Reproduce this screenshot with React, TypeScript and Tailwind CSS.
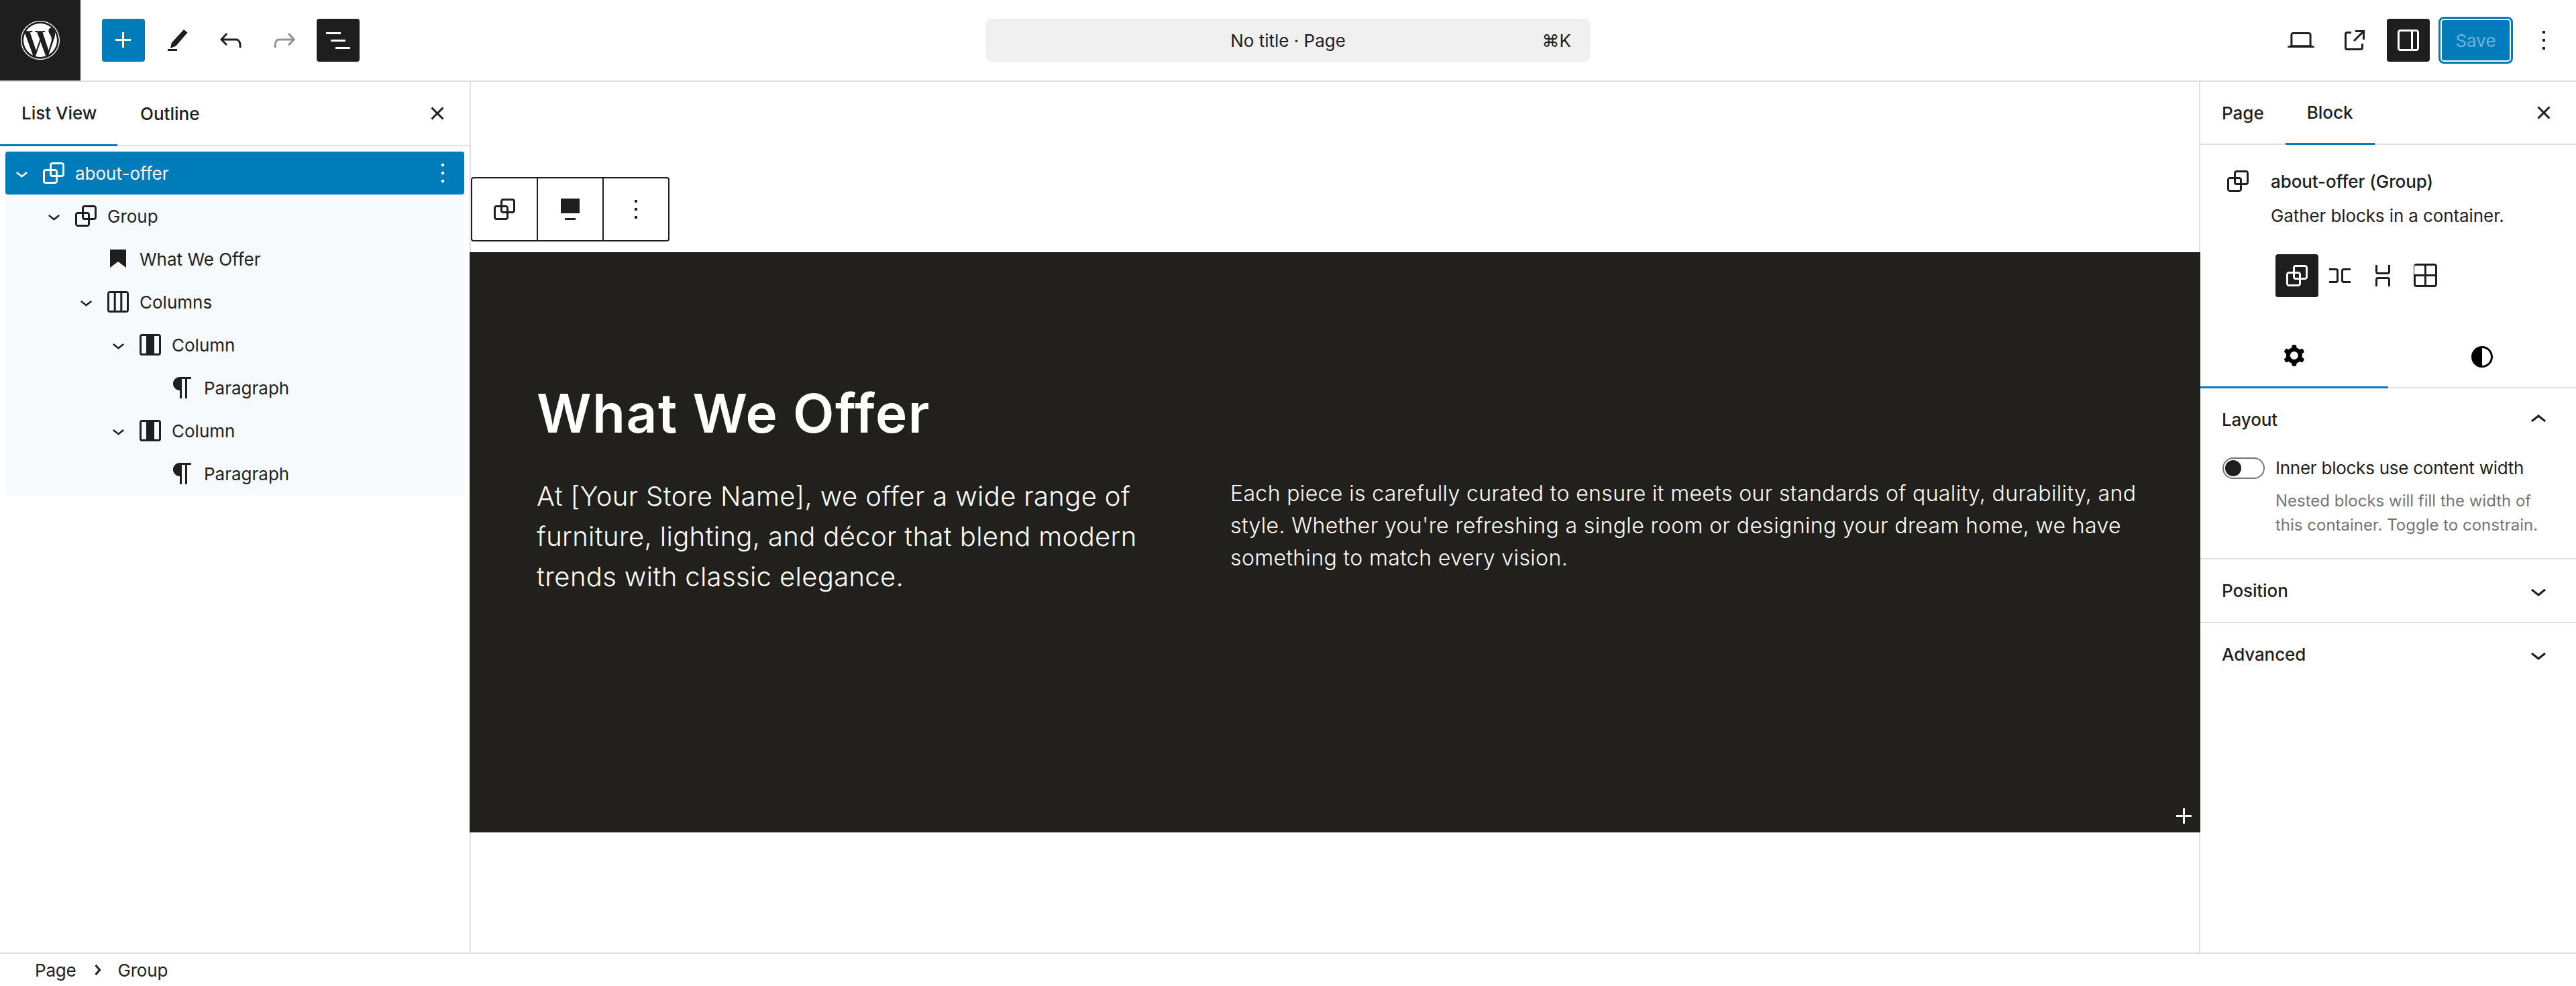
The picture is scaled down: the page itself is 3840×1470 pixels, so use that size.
import type { ReactNode } from "react";
import { FaWordpress } from "react-icons/fa";

const paths = {
  plus: "M11 12.5V17.5H12.5V12.5H17.5V11H12.5V6H11V11H6V12.5H11Z",
  pen: "M5 20h7v-1.5H5zM17 4l2.8 2.2-8.2 9.6c-.4.4-1 .8-1.6 1l-3 1.2.6-3c.2-.6.5-1.2.9-1.7z",
  undo: "M18.3 11.7c-.6-.6-1.4-.9-2.3-.9H6.7l2.9-3.3-1.1-1-4.5 5L8.5 16l1-1-2.7-2.7H16c.5 0 .9.2 1.3.5 1 1 1 3.4 1 4.5v.3h1.5v-.2c0-1.5 0-4.3-1.5-5.7z",
  redo: "M15.6 6.5l-1.1 1 2.9 3.3H8c-.9 0-1.7.3-2.3.9-1.4 1.5-1.4 4.2-1.4 5.7v.2h1.5v-.3c0-1.1 0-3.5 1-4.5.3-.3.7-.5 1.3-.5h9.2L14.5 15l1.1 1.1 4.6-4.6-4.6-5z",
  listView: "M3 6h11v1.5H3V6Zm3.5 5.5h11V13h-11v-1.5ZM21 17H10v1.5h11V17Z",
  desktop: "M20.5 16h-.7V8c0-1.1-.9-2-2-2H6.2c-1.1 0-2 .9-2 2v8h-.7c-.8 0-1.5.7-1.5 1.5h20c0-.8-.7-1.5-1.5-1.5zM5.7 8c0-.3.2-.5.5-.5h11.6c.3 0 .5.2.5.5v7.6H5.7V8z",
  external: "M19.5 4.5h-7V6h4.44l-5.97 5.97 1.06 1.06L18 7.06v4.44h1.5v-7Zm-13 1a2 2 0 0 0-2 2v10a2 2 0 0 0 2 2h10a2 2 0 0 0 2-2v-3H17v3a.5.5 0 0 1-.5.5h-10a.5.5 0 0 1-.5-.5v-10a.5.5 0 0 1 .5-.5h3V5.5h-3Z",
  sidebar: "M18 4H6c-1.1 0-2 .9-2 2v12c0 1.1.9 2 2 2h12c1.1 0 2-.9 2-2V6c0-1.1-.9-2-2-2zm-4 14.5H6c-.3 0-.5-.2-.5-.5V6c0-.3.2-.5.5-.5h8v13zm4.5-.5c0 .3-.2.5-.5.5h-2.5v-13H18c.3 0 .5.2.5.5v12z",
  kebab: "M13 19h-2v-2h2v2zm0-6h-2v-2h2v2zm0-6h-2V5h2v2z",
  close: "M12 13.06l3.712 3.713 1.061-1.06L13.061 12l3.712-3.712-1.06-1.06L12 10.938 8.288 7.227l-1.061 1.06L10.939 12l-3.712 3.712 1.06 1.061L12 13.061z",
  group: "M18 4h-7c-1.1 0-2 .9-2 2v3H6c-1.1 0-2 .9-2 2v7c0 1.1.9 2 2 2h7c1.1 0 2-.9 2-2v-3h3c1.1 0 2-.9 2-2V6c0-1.1-.9-2-2-2zm-4.5 14c0 .3-.2.5-.5.5H6c-.3 0-.5-.2-.5-.5v-7c0-.3.2-.5.5-.5h3V13c0 1.1.9 2 2 2h2.5v3zm0-4.5H11c-.3 0-.5-.2-.5-.5v-2.5H13c.3 0 .5.2.5.5v2.5zm5-.5c0 .3-.2.5-.5.5h-3V11c0-1.1-.9-2-2-2h-2.5V6c0-.3.2-.5.5-.5h7c.3 0 .5.2.5.5v7z",
  heading: "M6 5h12v13.5l-6-4.5-6 4.5z",
  columns: "M6 4h12a2 2 0 0 1 2 2v12a2 2 0 0 1-2 2H6a2 2 0 0 1-2-2V6a2 2 0 0 1 2-2Zm-.5 1.5v13h3.35v-13Zm4.85 0v13h3.3v-13Zm4.8 0v13h3.35v-13Z",
  column: "M6 4h12a2 2 0 0 1 2 2v12a2 2 0 0 1-2 2H6a2 2 0 0 1-2-2V6a2 2 0 0 1 2-2Zm-.5 1.5v13H9v-13Zm9.5 0v13h3.5v-13Z",
  paragraph: "m9.99609 14v-.2251l.00391.0001v6.225h1.5v-14.5h2.5v14.5h1.5v-14.5h3v-1.5h-8.50391c-2.76142 0-5 2.23858-5 5 0 2.7614 2.23858 5 5 5z",
  align: "M5 4h14v11H5zM8 18.5h8V20H8z",
  row: "M4 6.5h5a2 2 0 0 1 2 2v7a2 2 0 0 1-2 2H4V16h5a.5.5 0 0 0 .5-.5v-7A.5.5 0 0 0 9 8H4V6.5Zm16 0h-5a2 2 0 0 0-2 2v7a2 2 0 0 0 2 2h5V16h-5a.5.5 0 0 1-.5-.5v-7A.5.5 0 0 1 15 8h5V6.5Z",
  stack: "M17.5 4v5a2 2 0 0 1-2 2h-7a2 2 0 0 1-2-2V4H8v5a.5.5 0 0 0 .5.5h7A.5.5 0 0 0 16 9V4h1.5Zm0 16v-5a2 2 0 0 0-2-2h-7a2 2 0 0 0-2 2v5H8v-5a.5.5 0 0 1 .5-.5h7a.5.5 0 0 1 .5.5v5h1.5Z",
  grid: "m3 5c0-1.10457.89543-2 2-2h13.5c1.1046 0 2 .89543 2 2v13.5c0 1.1046-.8954 2-2 2h-13.5c-1.10457 0-2-.8954-2-2zm2-.5h6v6.5h-7.5v-6c0-.27614.22386-.5.5-.5zm-.5 8v6c0 .2761.22386.5.5.5h6v-6.5zm8 0v6.5h6c.2761 0 .5-.2239.5-.5v-6zm0-8v6.5h6.5v-6c0-.27614-.2239-.5-.5-.5z",
  cog: "M10.289 4.836A1 1 0 0 1 11.275 4h1.306a1 1 0 0 1 .987.836l.244 1.466c.787.26 1.503.679 2.108 1.218l1.393-.522a1 1 0 0 1 1.216.437l.653 1.13a1 1 0 0 1-.23 1.273l-1.148.944a6.025 6.025 0 0 1 0 2.435l1.149.946a1 1 0 0 1 .23 1.272l-.653 1.13a1 1 0 0 1-1.216.437l-1.394-.522c-.605.54-1.32.958-2.108 1.218l-.244 1.466a1 1 0 0 1-.987.836h-1.306a1 1 0 0 1-.986-.836l-.244-1.466a5.995 5.995 0 0 1-2.108-1.218l-1.394.522a1 1 0 0 1-1.217-.436l-.653-1.131a1 1 0 0 1 .23-1.272l1.149-.946a6.026 6.026 0 0 1 0-2.435l-1.148-.944a1 1 0 0 1-.23-1.272l.653-1.131a1 1 0 0 1 1.217-.437l1.393.522a5.994 5.994 0 0 1 2.108-1.218l.244-1.466ZM14.929 12a3 3 0 1 1-6 0 3 3 0 0 1 6 0Z",
  styles: "M12 4c-4.4 0-8 3.6-8 8v.1c0 4.3 3.5 7.8 7.8 7.9h.2c4.4 0 8-3.6 8-8s-3.6-8-8-8zm0 14.5V5.5c3.6 0 6.5 2.9 6.5 6.5s-2.9 6.5-6.5 6.5z",
  chevronDown: "M17.5 11.6L12 16l-5.5-4.4.9-1.2L12 14l4.5-3.6 1 1.2z",
  chevronUp: "M6.5 12.4L12 8l5.5 4.4-.9 1.2L12 10l-4.5 3.6-1-1.2z",
  chevronRight: "M10.8622 8.04053L14.2805 12.0286L10.8622 16.0167L9.72327 15.0405L12.3049 12.0286L9.72327 9.01672L10.8622 8.04053Z",
};

const Icon = ({ d, className = "w-12 h-12" }: { d: string; className?: string }) => (
  <svg viewBox="0 0 24 24" fill="currentColor" fillRule="evenodd" className={className}>
    <path d={d} />
  </svg>
);

const HeaderButton = ({ d, className = "" }: { d: string; className?: string }) => (
  <div className={`w-16 h-16 rounded-[4px] flex items-center justify-center ${className}`}>
    <Icon d={d} />
  </div>
);

const treeRows = [
  { label: "about-offer", icon: paths.group, depth: 0, expander: true, selected: true },
  { label: "Group", icon: paths.group, depth: 1, expander: true },
  { label: "What We Offer", icon: paths.heading, depth: 2 },
  { label: "Columns", icon: paths.columns, depth: 2, expander: true },
  { label: "Column", icon: paths.column, depth: 3, expander: true },
  { label: "Paragraph", icon: paths.paragraph, depth: 4 },
  { label: "Column", icon: paths.column, depth: 3, expander: true },
  { label: "Paragraph", icon: paths.paragraph, depth: 4 },
];

const TreeRow = ({ label, icon, depth, expander, selected }: (typeof treeRows)[number] & { selected?: boolean }) => (
  <div
    className={`h-16 flex items-center ${selected ? "bg-[#007cba] text-white rounded-[4px]" : "bg-[#f6fafd] text-[#1e1e1e]"}`}
    style={{ paddingLeft: depth * 48 }}
  >
    <div className="w-12 h-12 flex items-center justify-center">
      {expander && <Icon d={paths.chevronDown} className="w-[37px] h-[37px]" />}
    </div>
    <Icon d={icon} />
    <span className="ml-2">{label}</span>
    {selected && (
      <div className="ml-auto mr-2">
        <Icon d={paths.kebab} />
      </div>
    )}
  </div>
);

const PanelSection = ({ title, open, children }: { title: string; open?: boolean; children?: ReactNode }) => (
  <section className="border-b-2 border-[#e0e0e0] last:border-b-0">
    <div className="h-[93px] pl-8 pr-8 flex items-center justify-between font-[450] tracking-[-0.1px]">
      <span>{title}</span>
      <Icon d={open ? paths.chevronUp : paths.chevronDown} />
    </div>
    {children}
  </section>
);

export default function App() {
  return (
    <div className="w-[3840px] h-[1470px] flex flex-col bg-white text-[#1e1e1e] text-[26px] font-['Inter',sans-serif] overflow-hidden">
      {/* top bar */}
      <header className="h-[122px] shrink-0 border-b-2 border-[#e0e0e0] grid grid-cols-[1fr_900px_1fr] items-center">
        <div className="flex items-center">
          <div className="w-[120px] h-[120px] bg-[#1e1e1e] text-white flex items-center justify-center">
            <FaWordpress className="w-[60px] h-[60px]" />
          </div>
          <div className="ml-8 flex items-center gap-4">
            <HeaderButton d={paths.plus} className="bg-[#007cba] text-white" />
            <HeaderButton d={paths.pen} />
            <HeaderButton d={paths.undo} />
            <HeaderButton d={paths.redo} className="text-[#949494]" />
            <HeaderButton d={paths.listView} className="bg-[#1e1e1e] text-white" />
          </div>
        </div>
        <div className="h-16 rounded-[8px] bg-[#f0f0f0] relative flex items-center justify-center">
          <span>No title · Page</span>
          <span className="absolute right-7">⌘K</span>
        </div>
        <div className="flex items-center justify-end pr-4">
          <HeaderButton d={paths.desktop} />
          <HeaderButton d={paths.external} className="ml-4" />
          <HeaderButton d={paths.sidebar} className="ml-4 bg-[#1e1e1e] text-white" />
          <div className="ml-[13px] w-[111px] h-[70px] rounded-[8px] border-[3px] border-[#007cba] bg-white p-[2px]">
            <div className="w-full h-full rounded-[3px] bg-[#007cba] text-[#70b3d9] flex items-center justify-center">Save</div>
          </div>
          <HeaderButton d={paths.kebab} className="ml-[14px]" />
        </div>
      </header>

      <div className="flex-1 flex min-h-0">
        {/* list view */}
        <aside className="w-[702px] shrink-0 border-r-2 border-[#e0e0e0]">
          <div className="h-[96px] border-b-2 border-[#e0e0e0] flex font-medium">
            <div className="w-[175px] h-[96px] pl-8 flex items-center border-b-[3px] border-[#007cba]">List View</div>
            <div className="pl-[34px] flex items-center">Outline</div>
            <div className="ml-auto mr-6 flex items-center">
              <Icon d={paths.close} />
            </div>
          </div>
          <div className="mt-2 px-2">
            {treeRows.map((row, i) => (
              <TreeRow key={i} {...row} />
            ))}
          </div>
        </aside>

        {/* canvas */}
        <main className="flex-1 min-w-0 relative z-10 pt-[254px]">
          <div className="absolute left-0 top-[142px] h-24 flex bg-white border-2 border-[#1e1e1e] rounded-[4px] divide-x-2 divide-[#1e1e1e]">
            <div className="w-[98px] flex items-center justify-center"><Icon d={paths.group} /></div>
            <div className="w-[98px] flex items-center justify-center"><Icon d={paths.align} /></div>
            <div className="w-[96px] flex items-center justify-center"><Icon d={paths.kebab} /></div>
          </div>
          <div className="relative -mx-[2px] h-[865px] bg-[#21201c] text-white font-['Inter',sans-serif] pt-[192px] pl-[100px] pr-[90px]">
            <h1 className="text-[80px] leading-[96px] font-semibold tracking-[1.5px]">What We Offer</h1>
            <div className="mt-[48px] flex gap-[98px]">
              <p className="-mt-[2px] w-[936px] text-[40px] leading-[60px] font-light tracking-[0.35px]">
                At [Your Store Name], we offer a wide range of furniture, lighting, and décor that blend modern trends with classic elegance.
              </p>
              <p className="flex-1 text-[32px] leading-[48px] font-light tracking-[0.37px]">
                Each piece is carefully curated to ensure it meets our standards of quality, durability, and style. Whether you're refreshing a single room or designing your dream home, we have something to match every vision.
              </p>
            </div>
            <div className="absolute right-0 bottom-0">
              <Icon d={paths.plus} />
            </div>
          </div>
        </main>

        {/* settings */}
        <aside className="w-[562px] shrink-0 border-l-2 border-[#e0e0e0]">
          <div className="h-[94px] border-b-2 border-[#e0e0e0] flex font-medium">
            <div className="pl-8 pr-8 flex items-center">Page</div>
            <div className="h-[94px] px-8 flex items-center border-b-[3px] border-[#007cba]">Block</div>
            <div className="ml-auto mr-6 flex items-center">
              <Icon d={paths.close} />
            </div>
          </div>
          <div className="pt-[30px] pl-8 flex">
            <Icon d={paths.group} />
            <div className="ml-[25px] pt-[7px] tracking-[-0.1px]">
              <div className="leading-9 font-[450]">about-offer (Group)</div>
              <div className="mt-[15px] leading-9">Gather blocks in a container.</div>
              <div className="mt-[39px] ml-[7px] flex">
                <div className="w-16 h-16 rounded-[4px] bg-[#1e1e1e] text-white flex items-center justify-center"><Icon d={paths.group} /></div>
                <div className="w-16 h-16 flex items-center justify-center"><Icon d={paths.row} /></div>
                <div className="w-16 h-16 flex items-center justify-center"><Icon d={paths.stack} /></div>
                <div className="w-16 h-16 flex items-center justify-center"><Icon d={paths.grid} /></div>
              </div>
            </div>
          </div>
          <div className="mt-[41px] h-[95px] grid grid-cols-2 border-b-2 border-[#e0e0e0] text-black">
            <div className="h-[95px] flex items-center justify-center border-b-[3px] border-[#007cba]"><Icon d={paths.cog} /></div>
            <div className="flex items-center justify-center"><Icon d={paths.styles} /></div>
          </div>
          <PanelSection title="Layout" open>
            <div className="pl-[33px] pt-2 pb-[31px]">
              <div className="flex items-center">
                <div className="w-[63px] h-8 rounded-full border-2 border-[#757575] flex items-center px-[2px]">
                  <div className="w-6 h-6 rounded-full bg-[#1e1e1e]" />
                </div>
                <span className="ml-4 leading-9 tracking-[-0.25px]">Inner blocks use content width</span>
              </div>
              <p className="mt-[13px] ml-[79px] w-[400px] text-[24px] leading-9 text-[#757575]">
                Nested blocks will fill the width of this container. Toggle to constrain.
              </p>
            </div>
          </PanelSection>
          <PanelSection title="Position" />
          <PanelSection title="Advanced" />
        </aside>
      </div>

      {/* breadcrumb */}
      <footer className="h-[50px] shrink-0 border-t-2 border-[#e0e0e0] flex items-center pl-[52px] tracking-[-0.2px]">
        <span>Page</span>
        <Icon d={paths.chevronRight} className="w-12 h-12 ml-[8px]" />
        <span className="ml-[6px]">Group</span>
      </footer>
    </div>
  );
}
